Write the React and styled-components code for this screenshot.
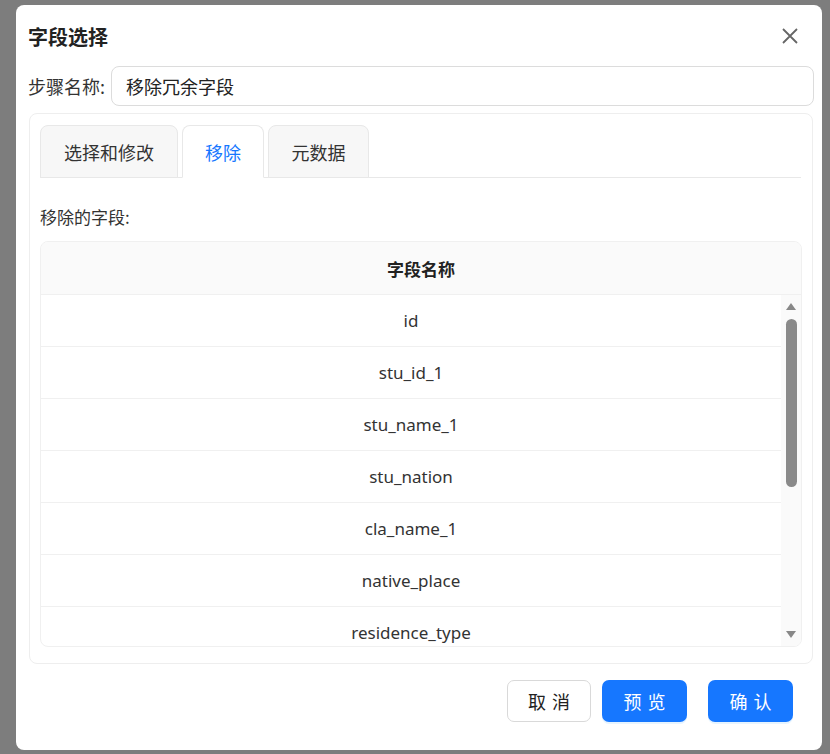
import React from "react";
import styled, { createGlobalStyle } from "styled-components";

const G = createGlobalStyle`
  html,body{margin:0;padding:0;background:#7d7d7d;}
  body{font-family:"Noto Sans CJK SC","Noto Sans",sans-serif;color:#222;}
`;
const Page = styled.div`width:830px;height:754px;padding:5px 8px 4px 16px;box-sizing:border-box;`;
const Modal = styled.div`width:806px;height:745px;background:#fff;border-radius:8px;box-sizing:border-box;padding:13px 8px 0 12px;display:flex;flex-direction:column;`;
const Head = styled.div`display:flex;justify-content:space-between;align-items:center;height:36px;`;
const Title = styled.div`font-size:20px;font-weight:700;color:#222;`;
const Close = styled.div`width:24px;height:24px;margin-right:12px;`;
const StepRow = styled.div`display:flex;align-items:center;margin-top:12px;gap:6px;`;
const Label = styled.div`font-size:18px;color:#333;`;
const Input = styled.div`flex:1;height:40px;border:1px solid #dcdcdc;border-radius:8px;box-sizing:border-box;display:flex;align-items:center;padding-left:14px;font-size:18px;`;
const Card = styled.div`margin:7px 0 0 1px;width:784px;height:551px;border:1px solid #eee;border-radius:8px;box-sizing:border-box;padding:11px 11px 0 10px;display:flex;flex-direction:column;`;
const Tabs = styled.div`display:flex;gap:4px;border-bottom:1px solid #e8e8e8;height:52px;`;
const Tab = styled.div`width:${p=>p.w}px;height:53px;box-sizing:border-box;border:1px solid #e8e8e8;border-radius:8px 8px 0 0;background:${p=>p.active?"#fff":"#f7f7f7"};border-bottom-color:${p=>p.active?"#fff":"#e8e8e8"};display:flex;align-items:center;justify-content:center;font-size:18px;color:${p=>p.active?"#1677ff":"#333"};`;
const SubLabel = styled.div`font-size:17px;color:#333;margin-top:26px;`;
const Table = styled.div`margin-top:12px;border:1px solid #f0f0f0;border-radius:8px;overflow:hidden;width:762px;box-sizing:border-box;`;
const TH = styled.div`height:52px;background:#fafafa;border-bottom:1px solid #f0f0f0;display:flex;align-items:center;justify-content:center;font-weight:700;font-size:17px;color:#222;`;
const Body = styled.div`display:flex;height:351px;`;
const Rows = styled.div`flex:1;overflow:hidden;`;
const Row = styled.div`height:52px;border-bottom:1px solid #f0f0f0;box-sizing:border-box;display:flex;align-items:center;justify-content:center;font-family:"Noto Sans",sans-serif;font-size:17px;color:#333;`;
const Track = styled.div`width:20px;background:#fafafa;display:flex;flex-direction:column;align-items:center;padding-top:8px;box-sizing:border-box;`;
const Arrow = styled.div`width:0;height:0;border-left:5px solid transparent;border-right:5px solid transparent;${p=>p.down?"border-top:7px solid #888;":"border-bottom:7px solid #888;"}`;
const Thumb = styled.div`width:11px;height:168px;background:#8a8a8a;border-radius:6px;margin-top:9px;`;
const Spacer = styled.div`flex:1;`;
const Foot = styled.div`display:flex;justify-content:flex-end;gap:11px;margin-top:16px;padding-right:21px;`;
const Btn = styled.div`width:${p=>p.primary?85:84}px;height:42px;box-sizing:border-box;border-radius:7px;display:flex;align-items:center;justify-content:center;font-size:18px;letter-spacing:6px;text-indent:6px;${p=>p.primary?"background:#1677ff;color:#fff;box-shadow:0 2px 0 rgba(5,145,255,.1);":"background:#fff;border:1px solid #d9d9d9;color:#222;"}${p=>p.gap?"margin-left:10px;":""}`;

const rows=["id","stu_id_1","stu_name_1","stu_nation","cla_name_1","native_place","residence_type","address"];

export default function App(){
  return <Page><G/><Modal>
    <Head><Title>字段选择</Title><Close><svg width="24" height="24" viewBox="0 0 24 24"><path d="M5 5L19 19M19 5L5 19" stroke="#666" strokeWidth="1.8"/></svg></Close></Head>
    <StepRow><Label>步骤名称:</Label><Input>移除冗余字段</Input></StepRow>
    <Card>
      <Tabs><Tab w={138}>选择和修改</Tab><Tab w={82} active>移除</Tab><Tab w={101}>元数据</Tab></Tabs>
      <SubLabel>移除的字段:</SubLabel>
      <Table>
        <TH>字段名称</TH>
        <Body>
          <Rows>{rows.map(r=><Row key={r}>{r}</Row>)}</Rows>
          <Track><Arrow/><Thumb/><Spacer/><Arrow down/><div style={{height:8}}/></Track>
        </Body>
      </Table>
    </Card>
    <Foot><Btn>取消</Btn><Btn primary>预览</Btn><Btn primary gap>确认</Btn></Foot>
  </Modal></Page>;
}
